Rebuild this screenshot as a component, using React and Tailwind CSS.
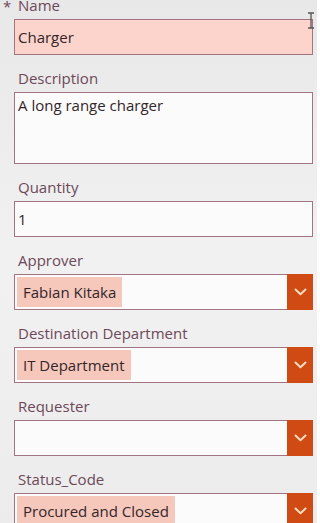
const FONT = { fontFamily: '"Open Sans", "Liberation Sans", sans-serif' }

function Label({ children, required, first }) {
  return (
    <div className={`relative h-[20px] mb-[4px] pl-[4px] text-[15px] leading-[20px] text-[#6d4858] ${first ? '-mt-[5px]' : 'mt-[13px]'}`}>
      {required && <span className="absolute -left-[11px] top-[1px]">*</span>}
      {children}
    </div>
  )
}

function TextBox({ value, highlight, tall }) {
  return (
    <div
      className={`border border-[#a27380] px-[3px] text-[15px] text-[#33262a] ${
        tall ? 'h-[72px] pt-[1px] leading-[22px]' : 'h-[36px] flex items-center'
      } ${highlight ? 'bg-[#fcd4cb]' : 'bg-[#fbfbfb]'}`}
    >
      {value}
    </div>
  )
}

function Chevron() {
  return (
    <svg width="13" height="8" viewBox="0 0 13 8">
      <path d="M1.5 1.5L6.5 6.2L11.5 1.5" stroke="#f6dcbc" strokeWidth="2" fill="none" strokeLinecap="round" strokeLinejoin="round" />
    </svg>
  )
}

function Dropdown({ value }) {
  return (
    <div className="h-[36px] flex border border-[#a27380] bg-[#fbfbfb]">
      <div className="flex-1 flex items-center p-[2px]">
        {value && (
          <span className="h-full flex items-center px-[6px] bg-[#f6c8bc] text-[15px] text-[#33262a]">
            {value}
          </span>
        )}
      </div>
      <div className="w-[26px] -my-px -mr-px flex items-center justify-center bg-[#d04b14]">
        <Chevron />
      </div>
    </div>
  )
}

export default function App() {
  return (
    <div
      className="relative w-[317px] h-[523px] overflow-hidden bg-gradient-to-b from-[#e8e8e8] via-[#f1f1f1] to-[#ececec]"
      style={FONT}
    >
      <div className="pl-[14px] pr-[4px]">
        <Label required first>Name</Label>
        <TextBox value="Charger" highlight />

        <Label>Description</Label>
        <TextBox value="A long range charger" tall />

        <Label>Quantity</Label>
        <TextBox value="1" />

        <Label>Approver</Label>
        <Dropdown value="Fabian Kitaka" />

        <Label>Destination Department</Label>
        <Dropdown value="IT Department" />

        <Label>Requester</Label>
        <Dropdown />

        <Label>Status_Code</Label>
        <Dropdown value="Procured and Closed" />
      </div>

      {/* text cursor */}
      <svg className="absolute left-[307px] top-[12px]" width="8" height="17" viewBox="0 0 8 17">
        <path d="M1 1h6M4 1v15M1 16h6" stroke="#555" strokeWidth="1.3" fill="none" />
      </svg>
    </div>
  )
}
